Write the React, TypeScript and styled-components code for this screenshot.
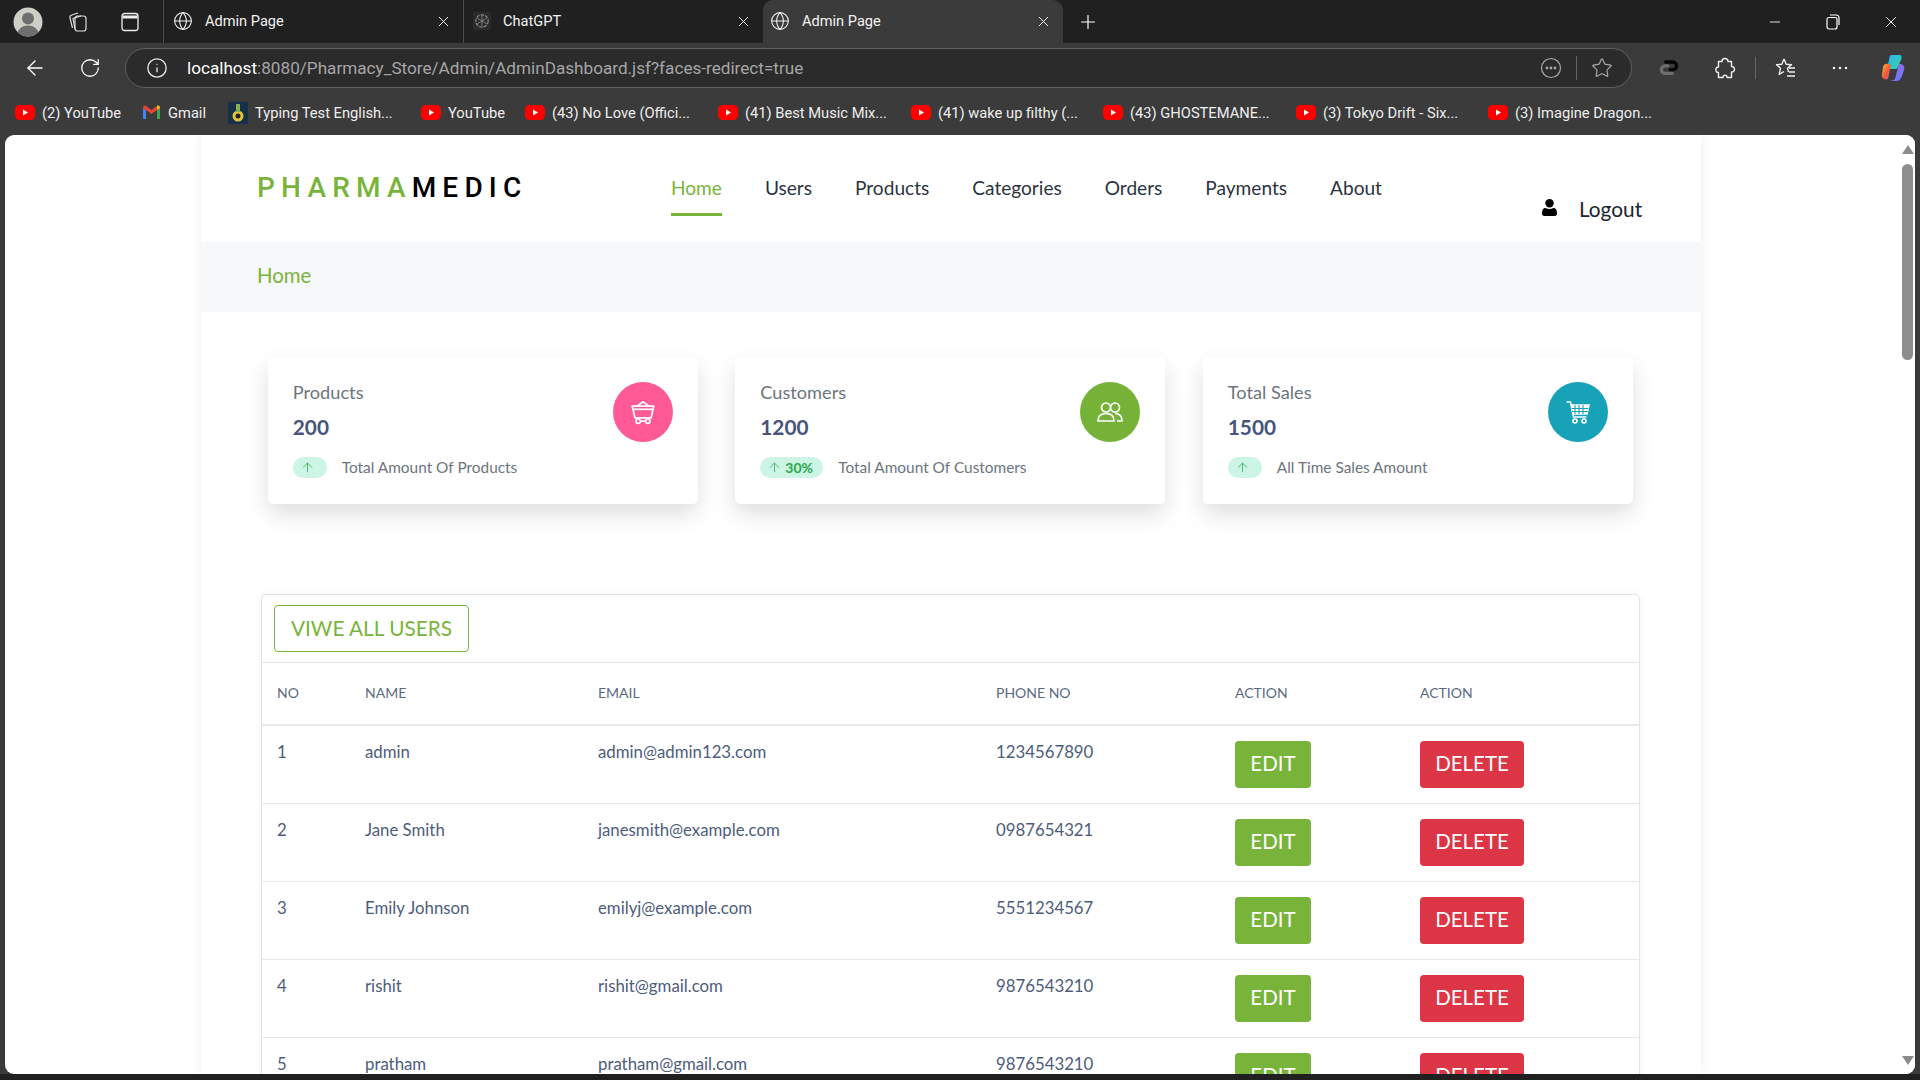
import React from "react";
import styled, { createGlobalStyle } from "styled-components";
import { ArrowLeft, ArrowUp, Globe, Info, Minus, Plus, RotateCw, Star, X } from "lucide-react";

const GREEN = "#78b43a";
const BODY = `Lato, "Open Sans", sans-serif`;
const UI = `Roboto, "Liberation Sans", sans-serif`;

const Global = createGlobalStyle`
  html, body { margin: 0; padding: 0; height: 100%; overflow: hidden; background: #202020; }
  * { box-sizing: border-box; }
`;

const Frame = styled.div`
  width: 1920px; height: 1080px; display: flex; flex-direction: column;
  background: #3b3b3b; font-family: ${UI}; overflow: hidden;
`;
const TabStrip = styled.div`
  height: 43px; flex: none; background: #202020; display: flex; align-items: center; color: #fff;
`;
const StripIcon = styled.div<{ $w: number }>`
  width: ${(p) => p.$w}px; height: 43px; flex: none; display: flex; align-items: center; justify-content: center;
`;
const Tab = styled.div<{ $active?: boolean }>`
  width: 300px; height: 43px; flex: none; display: flex; align-items: center; padding: 0 11px 1px ${(p) => (p.$active ? 7 : 9)}px;
  gap: 12px; font-size: 14.6px; color: #f2f2f2;
  border-left: ${(p) => (p.$active ? "none" : "1px solid #4d4d4d")};
  background: ${(p) => (p.$active ? "#3b3b3b" : "transparent")};
  border-radius: ${(p) => (p.$active ? "10px 10px 0 0" : "0")};
  span { flex: 1; }
`;
const Strip = styled.div`flex: 1;`;
const Toolbar = styled.div`
  height: 49px; flex: none; display: flex; align-items: center; padding-left: 13px; color: #fff;
`;
const ToolBtn = styled.div<{ $ml?: number }>`
  width: 44px; height: 40px; flex: none; display: flex; align-items: center; justify-content: center;
  margin-left: ${(p) => p.$ml ?? 0}px;
`;
const Address = styled.div`
  width: 1507px; height: 40px; flex: none; margin-left: 13px; margin-right: 15px; padding: 0 18px 0 20px;
  background: #2b2b2b; border: 1px solid #5f5f5f; border-radius: 20px; display: flex; align-items: center;
`;
const Url = styled.div`
  flex: 1; margin-left: 19px; font-size: 17.15px; color: #a6a6a6; white-space: nowrap;
  b { color: #fff; font-weight: 400; }
`;
const VSep = styled.div<{ $h: number; $mx: number }>`
  width: 1px; height: ${(p) => p.$h}px; background: #666; margin: 0 ${(p) => p.$mx}px; flex: none;
`;
const Bookmarks = styled.div`
  height: 43px; flex: none; display: flex; align-items: center; padding: 0 0 2px 15px; color: #eee; font-size: 14.7px;
`;
const Mark = styled.div<{ $w: number }>`
  width: ${(p) => p.$w}px; flex: none; display: flex; align-items: center; gap: 7px; white-space: nowrap;
  svg { flex: none; }
`;

const Viewport = styled.div`
  flex: none; height: 939px; margin: 0 5px; background: #fff; border-radius: 9px; display: flex; overflow: hidden;
`;
const PageArea = styled.div`
  flex: 1; display: flex; overflow: hidden; min-width: 0; padding-left: 196px;
`;
const Column = styled.div`
  width: 1500px; flex: none; background: #fff; box-shadow: 0 0 10px rgba(0, 0, 0, 0.07); font-family: ${BODY};
`;
const Header = styled.header`
  height: 107px; display: flex; padding-left: 57px;
`;
const Logo = styled.div`
  width: 413px; flex: none; padding-top: 36px; font-family: Roboto, sans-serif; font-size: 28px; line-height: 34px;
  font-weight: 500; letter-spacing: 6.2px; color: #000; white-space: nowrap; margin-left: -1px;
  span { color: ${GREEN}; }
`;
const Nav = styled.nav`
  display: flex; gap: 43px; height: 81px; align-items: flex-start; margin-left: 1px;
`;
const NavLink = styled.a<{ $active?: boolean }>`
  display: block; height: 81px; padding-top: 42px; font-size: 19.1px; line-height: 22px; color: ${(p) => (p.$active ? GREEN : "#2c3440")};
  border-bottom: ${(p) => (p.$active ? `3px solid ${GREEN}` : "3px solid transparent")};
`;
const Logout = styled.div`
  margin-left: 160px; padding-top: 62px; display: flex; gap: 22px; font-size: 20.8px; line-height: 24px; color: #1b2430; align-items: flex-start;
  svg { margin-top: 2px; }
`;
const Crumb = styled.div`
  height: 70px; background: #f7f8fa; padding: 0 0 4px 56px; display: flex; align-items: center; font-size: 20.4px; color: ${GREEN};
`;
const Cards = styled.div`
  display: flex; gap: 37.5px; padding: 45px 0 0 66.8px;
`;
const Card = styled.section`
  width: 430px; height: 147px; flex: none; border-radius: 5px; background: #fff; padding: 25px;
  box-shadow: 0 10px 22px rgba(0, 0, 0, 0.13); display: flex; justify-content: space-between;
`;
const CardTitle = styled.div`
  font-size: 18.2px; line-height: 21px; color: #6c757d;
`;
const CardValue = styled.div`
  font-size: 20.8px; line-height: 26px; font-weight: 700; color: #46547c; margin-top: 11px;
`;
const CardFoot = styled.div`
  display: flex; align-items: center; margin-top: 15px; font-size: 15.4px; color: #6c757d; gap: 15px; white-space: nowrap;
`;
const Badge = styled.div<{ $w: number }>`
  width: ${(p) => p.$w}px; height: 21px; margin-top: 2px; border-radius: 11px; background: #ccf5e6; color: #28a745; display: flex; align-items: center;
  padding-left: 7px; gap: 3px; font-size: 14px; font-weight: 700;
`;
const Circle = styled.div<{ $c: string }>`
  width: 60px; height: 60px; border-radius: 50%; background: ${(p) => p.$c}; flex: none; display: flex; align-items: center; justify-content: center;
`;
const TableCard = styled.section`
  margin: 90px 0 0 60px; width: 1379px; border: 1px solid #e2e3e6; border-radius: 5px 5px 0 0; background: #fff;
  box-shadow: 0 0 8px rgba(0, 0, 0, 0.05);
`;
const CardHead = styled.div`
  height: 68px; padding: 10px 12px; border-bottom: 1px solid #e4e6ea;
`;
const ViewAll = styled.button`
  width: 195px; height: 47px; padding: 0 0 2px; background: #fff; border: 1px solid ${GREEN}; border-radius: 4px;
  font-family: ${BODY}; font-size: 20.8px; color: ${GREEN}; text-transform: uppercase;
`;
const Table = styled.table`
  width: 1377px; border-collapse: collapse; table-layout: fixed;
`;
const Th = styled.th`
  height: 62px; padding: 0 15px 3px; text-align: left; font-size: 14px; font-weight: 400; color: #5b6a82; border-bottom: 2px solid #e6e8ec; text-transform: uppercase;
`;
const Td = styled.td`
  height: 78px; padding: 16px 15px 0; vertical-align: top; font-size: 16.8px; line-height: 20px; color: #4e5c7c; border-bottom: 1px solid #e6e8ec;
`;
const ActionTd = styled(Td)`
  padding: 15px 15px 0;
`;
const ActionBtn = styled.button<{ $c: string; $w: number }>`
  width: ${(p) => p.$w}px; height: 47px; padding: 0 0 3px; border: none; border-radius: 4px; background: ${(p) => p.$c}; color: #fff;
  font-family: ${BODY}; font-size: 20.5px; text-transform: uppercase; display: block;
`;
const Scrollbar = styled.div`
  width: 15px; flex: none; background: #fff; display: flex; flex-direction: column; align-items: center; padding-top: 10px;
`;
const Arrow = styled.div<{ $down?: boolean }>`
  width: 0; height: 0; border-left: 6.5px solid transparent; border-right: 6.5px solid transparent; flex: none;
  ${(p) => (p.$down ? "border-top: 9px solid #8c8c8c; margin-top: 696px;" : "border-bottom: 9px solid #8c8c8c;")}
`;
const Thumb = styled.div`
  width: 11px; height: 196px; border-radius: 6px; background: #8e8e8e; margin-top: 10px; flex: none;
`;
const BottomBar = styled.div`
  flex: 1; background: #202020;
`;

const Avatar = () => (
  <svg width="30" height="30" viewBox="0 0 30 30">
    <circle cx="15" cy="15" r="14.5" fill="#cfcdc8" />
    <clipPath id="av"><circle cx="15" cy="15" r="14.5" /></clipPath>
    <g clipPath="url(#av)" fill="#6e6e6e">
      <circle cx="15" cy="11.5" r="6" />
      <ellipse cx="15" cy="27" rx="10.5" ry="8.5" />
    </g>
  </svg>
);
const Collections = () => (
  <svg width="22" height="24" viewBox="0 0 22 24" fill="none" stroke="#ddd" strokeWidth="1.2">
    <rect x="8" y="6" width="11" height="15" rx="2.5" />
    <path d="M5.5 18 3 8a2.5 2.5 0 0 1 1.8-3L11 3" />
    <path d="M8 19.5 6 8.5 14 6" />
  </svg>
);
const WindowIcon = () => (
  <svg width="18" height="20" viewBox="0 0 18 20" fill="none" stroke="#eee" strokeWidth="1.3">
    <rect x="1" y="1.5" width="16" height="17" rx="2.5" />
    <path d="M1.5 5h15" strokeWidth="3" />
  </svg>
);
const Gpt = () => (
  <svg width="18" height="18" viewBox="0 0 16 16" fill="none" stroke="#8e8e8e" strokeWidth="1">
    <rect width="16" height="16" fill="#2b2b2b" stroke="none" />
    <circle cx="8" cy="8" r="5.5" strokeDasharray="3 1" />
    <path d="M8 3v10M3.7 5.5l8.6 5M12.3 5.5l-8.6 5" strokeWidth=".7" />
  </svg>
);
const DotsCircle = () => (
  <svg width="22" height="22" viewBox="0 0 22 22" fill="none" stroke="#a8a8a8" strokeWidth="1.2">
    <circle cx="11" cy="11" r="9.5" />
    <circle cx="7" cy="11" r=".8" fill="#a8a8a8" />
    <circle cx="11" cy="11" r=".8" fill="#a8a8a8" />
    <circle cx="15" cy="11" r=".8" fill="#a8a8a8" />
  </svg>
);
const Chain = () => (
  <svg width="24" height="24" viewBox="0 0 22 22" fill="none" strokeWidth="3" strokeLinecap="round">
    <path d="M14 16H7.500a3.500 3.500 0 0 1 0-7H10" stroke="#6e6e6e" />
    <path d="M8 5.500h6.500a3.500 3.500 0 0 1 0 7H12" stroke="#050505" />
  </svg>
);
const Puzzle = () => (
  <svg width="22" height="24" viewBox="0 0 22 24" fill="none" stroke="#eee" strokeWidth="1.4" strokeLinejoin="round">
    <path d="M8 5.5c0-4 6-4 6 0h3.5v5c4-.5 4 6 0 5.5v5.5H13c.5-3-4.500-3-4 0H4.500v-5c-3.500.5-3.500-6 0-5.500V5.500z" />
  </svg>
);
const FavList = () => (
  <svg width="24" height="24" viewBox="0 0 24 24" fill="none" stroke="#eee" strokeWidth="1.4" strokeLinejoin="round">
    <path d="M10 3l2.200 5.200 5.300.5-4 3.600 1 3.700M10 3 7.800 8.200l-5.300.5 4 3.600-1.300 6 4.800-2.800" />
    <path d="M15 12h6M15 16h6M13 20h8" />
  </svg>
);
const Dots = () => (
  <svg width="20" height="6" viewBox="0 0 20 6" fill="#eee">
    <circle cx="4" cy="3" r="1.3" /><circle cx="10" cy="3" r="1.3" /><circle cx="16" cy="3" r="1.3" />
  </svg>
);
const Copilot = () => (
  <svg width="30" height="30" viewBox="0 0 30 30">
    <defs>
      <linearGradient id="cp1" x1="0" y1="0" x2="1" y2="1"><stop offset="0" stopColor="#2fb4f5" /><stop offset="1" stopColor="#30d5a0" /></linearGradient>
      <linearGradient id="cp2" x1="0" y1="0" x2="1" y2="1"><stop offset="0" stopColor="#ffb02e" /><stop offset=".6" stopColor="#f2553d" /><stop offset="1" stopColor="#e64fb0" /></linearGradient>
      <linearGradient id="cp3" x1="0" y1="0" x2="1" y2="1"><stop offset="0" stopColor="#b465f5" /><stop offset="1" stopColor="#5b7cf7" /></linearGradient>
    </defs>
    <path d="M12 2h8c3 0 3 2 2 5l-4 9H8l2-9c.5-3 1-5 2-5z" fill="url(#cp1)" />
    <path d="M4 14c.5-3 3-4 6-3l2 1-3 14c-4 1-7-1-6-5z" fill="url(#cp2)" />
    <path d="M16 26c-2 2-5 2-8 2h9c3 0 5-2 6-5l2-6c1-3 0-5-3-6h-2l-4 15z" fill="url(#cp3)" />
  </svg>
);
const Yt = () => (
  <svg width="20" height="17" viewBox="0 0 20 17">
    <rect width="20" height="15" y="1" rx="4.5" fill="#f00" />
    <path d="M8 5.500l5 3-5 3z" fill="#fff" />
  </svg>
);
const Gmail = () => (
  <svg width="19" height="15" viewBox="0 0 19 15">
    <path d="M1 14V3l3 2v9z" fill="#4285f4" />
    <path d="M15 14V5l3-2v11z" fill="#34a853" />
    <path d="M1 3c0-2 2-3 3-2l5.500 4L15 1c1-1 3 0 3 2l-3 2-5.500 4L4 5z" fill="#ea4335" />
    <path d="M15 1c1-1 3 0 3 2l-3 2z" fill="#fbbc04" />
  </svg>
);
const Typing = () => (
  <svg width="20" height="22" viewBox="0 0 20 22">
    <rect width="20" height="22" fill="#17304a" />
    <circle cx="10" cy="14" r="5.5" fill="#e2c33c" />
    <path d="M8 2h4v8H8z" fill="#7fb04b" />
    <circle cx="10" cy="14" r="2.5" fill="#222" />
  </svg>
);
const Basket = () => (
  <svg width="28" height="28" viewBox="0 0 26 26" fill="none" stroke="#fff" strokeWidth="1.6" strokeLinejoin="round">
    <path d="M3 7.500h20l-2.500 11h-15z" />
    <path d="M7.500 7.500 13 3.500l5.500 4" />
    <path d="M4 10.500h18" />
    <circle cx="8.500" cy="21.500" r="2" /><circle cx="17.500" cy="21.500" r="2" />
    <path d="M10.500 21.500h5" />
  </svg>
);
const TwoUsers = () => (
  <svg width="28" height="24" viewBox="0 0 28 24" fill="none" stroke="#fff" strokeWidth="1.7">
    <circle cx="10" cy="7.500" r="4.500" />
    <path d="M2 21c0-5 3-7.500 8-7.500S18 16 18 21z" strokeLinejoin="round" />
    <circle cx="19" cy="7.500" r="4.500" />
    <path d="M19 13.500c4 0 7 2.500 7 7.500h-5" />
  </svg>
);
const CartIcon = () => (
  <svg width="26" height="26" viewBox="0 0 26 26" fill="none" stroke="#fff" strokeWidth="1.6">
    <path d="M1.500 3h4l3 15h13" />
    <path d="M6 6h18l-2 9H8" fill="#fff" />
    <path d="M10 6v9M14 6v9M18 6v9M6.500 9.500h17M7 12.500h16" stroke="#17a2b8" strokeWidth="1.1" />
    <circle cx="10" cy="22" r="2" /><circle cx="19" cy="22" r="2" />
  </svg>
);
const UserSolid = () => (
  <svg width="15" height="17" viewBox="0 0 15 17" fill="#000">
    <circle cx="7.500" cy="4.200" r="4.200" />
    <path d="M0 14.500c0-4 1.500-5.500 3.500-5.500 2.500 1.200 5.500 1.200 8 0 2 0 3.500 1.500 3.500 5.500 0 1.500-1 2.500-2 2.500H2c-1 0-2-1-2-2.500z" />
  </svg>
);

const bookmarks: { icon: React.ReactNode; label: string; w: number }[] = [
  { icon: <Yt />, label: "(2) YouTube", w: 127 },
  { icon: <Gmail />, label: "Gmail", w: 86 },
  { icon: <Typing />, label: "Typing Test English...", w: 193 },
  { icon: <Yt />, label: "YouTube", w: 104 },
  { icon: <Yt />, label: "(43) No Love (Offici...", w: 193 },
  { icon: <Yt />, label: "(41) Best Music Mix...", w: 193 },
  { icon: <Yt />, label: "(41) wake up filthy (...", w: 192 },
  { icon: <Yt />, label: "(43) GHOSTEMANE...", w: 193 },
  { icon: <Yt />, label: "(3) Tokyo Drift - Six...", w: 192 },
  { icon: <Yt />, label: "(3) Imagine Dragon...", w: 190 },
];
const navItems = ["Home", "Users", "Products", "Categories", "Orders", "Payments", "About"];
const users = [
  ["1", "admin", "admin@admin123.com", "1234567890"],
  ["2", "Jane Smith", "janesmith@example.com", "0987654321"],
  ["3", "Emily Johnson", "emilyj@example.com", "5551234567"],
  ["4", "rishit", "rishit@gmail.com", "9876543210"],
  ["5", "pratham", "pratham@gmail.com", "9876543210"],
];
const stats = [
  { title: "Products", value: "200", badgeW: 34, badge: "", foot: "Total Amount Of Products", color: "#ff5a96", icon: <Basket /> },
  { title: "Customers", value: "1200", badgeW: 63, badge: "30%", foot: "Total Amount Of Customers", color: "#77b238", icon: <TwoUsers /> },
  { title: "Total Sales", value: "1500", badgeW: 34, badge: "", foot: "All Time Sales Amount", color: "#17a2b8", icon: <CartIcon /> },
];
const colWidths = [88, 233, 398, 239, 185, 234];
const headers = ["No", "Name", "Email", "Phone No", "Action", "Action"];

export default function App() {
  return (
    <Frame>
      <Global />
      <TabStrip>
        <StripIcon $w={56}><Avatar /></StripIcon>
        <StripIcon $w={44}><Collections /></StripIcon>
        <StripIcon $w={60}><WindowIcon /></StripIcon>
        <StripIcon $w={3} />
        <Tab><Globe size={20} strokeWidth={1.3} /><span>Admin Page</span><X size={17} strokeWidth={1.4} /></Tab>
        <Tab><Gpt /><span>ChatGPT</span><X size={17} strokeWidth={1.4} /></Tab>
        <Tab $active><Globe size={20} strokeWidth={1.3} /><span>Admin Page</span><X size={17} strokeWidth={1.4} /></Tab>
        <StripIcon $w={50}><Plus size={22} strokeWidth={1.3} /></StripIcon>
        <Strip />
        <StripIcon $w={58}><Minus size={16} strokeWidth={1.3} /></StripIcon>
        <StripIcon $w={58}>
          <svg width="14" height="16" viewBox="0 0 14 16" fill="none" stroke="#fff" strokeWidth="1.2">
            <rect x="1" y="3.500" width="10" height="11.500" rx="2" /><path d="M4 1h6a3 3 0 0 1 3 3v7" />
          </svg>
        </StripIcon>
        <StripIcon $w={58}><X size={18} strokeWidth={1.2} /></StripIcon>
      </TabStrip>
      <Toolbar>
        <ToolBtn><ArrowLeft size={24} strokeWidth={1.4} /></ToolBtn>
        <ToolBtn $ml={11}><RotateCw size={22} strokeWidth={1.4} /></ToolBtn>
        <Address>
          <Info size={22} strokeWidth={1.4} color="#eee" />
          <Url><b>localhost</b>:8080/Pharmacy_Store/Admin/AdminDashboard.jsf?faces-redirect=true</Url>
          <DotsCircle />
          <VSep $h={24} $mx={14} />
          <Star size={22} strokeWidth={1.3} color="#a8a8a8" />
        </Address>
        <ToolBtn $ml={0}><Chain /></ToolBtn>
        <ToolBtn $ml={12}><Puzzle /></ToolBtn>
        <VSep $h={22} $mx={8} />
        <ToolBtn><FavList /></ToolBtn>
        <ToolBtn $ml={10}><Dots /></ToolBtn>
        <ToolBtn $ml={10}><Copilot /></ToolBtn>
      </Toolbar>
      <Bookmarks>
        {bookmarks.map((b) => (
          <Mark key={b.label} $w={b.w}>{b.icon}<span>{b.label}</span></Mark>
        ))}
      </Bookmarks>
      <Viewport>
        <PageArea>
          <Column>
            <Header>
              <Logo><span>PHARMA</span>MEDIC</Logo>
              <Nav>
                {navItems.map((n, i) => (
                  <NavLink key={n} $active={i === 0}>{n}</NavLink>
                ))}
              </Nav>
              <Logout><UserSolid />Logout</Logout>
            </Header>
            <Crumb>Home</Crumb>
            <Cards>
              {stats.map((s) => (
                <Card key={s.title}>
                  <div>
                    <CardTitle>{s.title}</CardTitle>
                    <CardValue>{s.value}</CardValue>
                    <CardFoot>
                      <Badge $w={s.badgeW}><ArrowUp size={15} strokeWidth={1.2} />{s.badge}</Badge>
                      {s.foot}
                    </CardFoot>
                  </div>
                  <Circle $c={s.color}>{s.icon}</Circle>
                </Card>
              ))}
            </Cards>
            <TableCard>
              <CardHead><ViewAll>Viwe All Users</ViewAll></CardHead>
              <Table>
                <colgroup>
                  {colWidths.map((w, i) => <col key={i} width={w} />)}
                </colgroup>
                <thead>
                  <tr>{headers.map((h, i) => <Th key={i}>{h}</Th>)}</tr>
                </thead>
                <tbody>
                  {users.map((u) => (
                    <tr key={u[0]}>
                      {u.map((c, i) => <Td key={i}>{c}</Td>)}
                      <ActionTd><ActionBtn $c="#78b43a" $w={76}>Edit</ActionBtn></ActionTd>
                      <ActionTd><ActionBtn $c="#dc3545" $w={104}>Delete</ActionBtn></ActionTd>
                    </tr>
                  ))}
                </tbody>
              </Table>
            </TableCard>
          </Column>
        </PageArea>
        <Scrollbar>
          <Arrow />
          <Thumb />
          <Arrow $down />
        </Scrollbar>
      </Viewport>
      <BottomBar />
    </Frame>
  );
}
